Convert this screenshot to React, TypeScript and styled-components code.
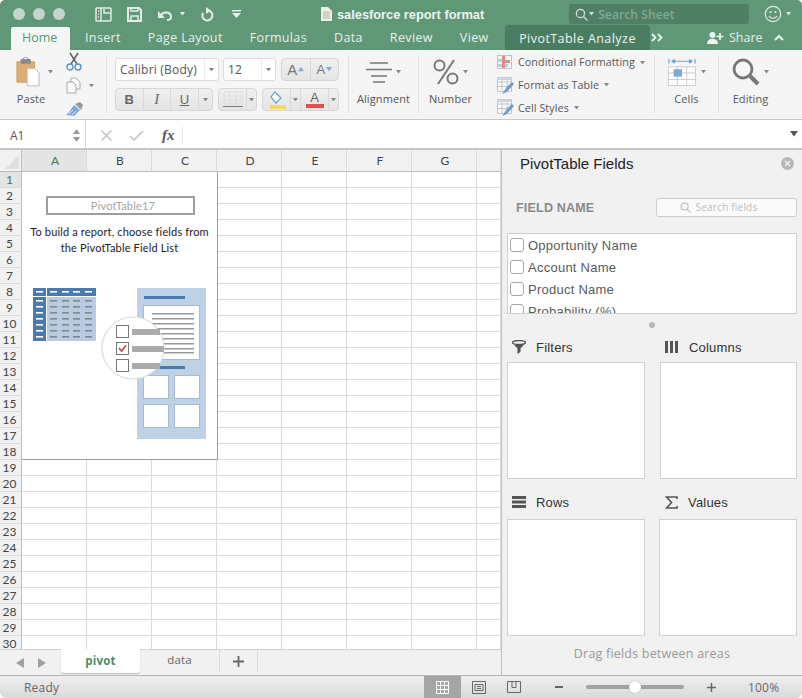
import styled, { createGlobalStyle } from 'styled-components';

const GlobalStyle = createGlobalStyle`
  html, body { margin: 0; padding: 0; background: #fff; }
  body { font-family: "Open Sans", "Liberation Sans", sans-serif; }
  * { box-sizing: border-box; }
`;

const GREEN = '#5f9777';
const columns = ['A', 'B', 'C', 'D', 'E', 'F', 'G', ''];
const rows = Array.from({ length: 30 }, (_, i) => i + 1);
const tabs = ['Insert', 'Page Layout', 'Formulas', 'Data', 'Review', 'View'];
const fields = ['Opportunity Name', 'Account Name', 'Product Name', 'Probability (%)'];

const Window = styled.div`
  width: 802px;
  height: 698px;
  display: flex;
  flex-direction: column;
  overflow: hidden;
  border-radius: 5px 5px 6px 6px;
  background: #fff;
`;

const Header = styled.header`
  background: ${GREEN};
  height: 50px;
  flex-shrink: 0;
`;

const TitleBar = styled.div`
  height: 28px;
  display: flex;
  align-items: center;
  padding-left: 13px;
  position: relative;
`;

const Light = styled.span`
  width: 12px;
  height: 12px;
  border-radius: 50%;
  background: #c6d5cc;
  margin-right: 8px;
`;

const QuickTool = styled.span<{ $left: number }>`
  display: flex;
  margin-left: ${(p) => p.$left}px;
`;

const DocTitle = styled.div`
  margin-left: 80px;
  display: flex;
  align-items: center;
  gap: 5px;
  width: 248px;
  font-family: "Liberation Sans", sans-serif;
  font-size: 12.8px;
  font-weight: 700;
  color: #eef4f0;
  white-space: nowrap;
`;

const SheetSearch = styled.div`
  width: 180px;
  height: 20px;
  border-radius: 3px;
  background: #4f8065;
  display: flex;
  align-items: center;
  padding-left: 6px;
  gap: 1px;
  color: #83a994;
  font-size: 12px;
  font-weight: 600;
  letter-spacing: 0.1px;
`;

const Smiley = styled.div`
  margin-left: 15px;
  display: flex;
  align-items: center;
  gap: 4px;
`;

const TabBar = styled.nav`
  height: 22px;
  display: flex;
  align-items: flex-end;
  padding-left: 11px;
  gap: 5px;
  position: relative;
`;

const Tab = styled.div<{ $active?: boolean }>`
  height: ${(p) => (p.$active ? '23px' : '22px')};
  width: ${(p) => (p.$active ? '59px' : 'auto')};
  margin-right: ${(p) => (p.$active ? '-1px' : '0')};
  padding: 0 11px 3px;
  display: flex;
  align-items: center;
  font-size: 12.5px;
  letter-spacing: ${(p) => (p.$active ? '0' : '0.36px')};
  color: ${(p) => (p.$active ? '#5f9777' : '#e9f1ec')};
  background: ${(p) => (p.$active ? '#f5f5f5' : 'transparent')};
  border-radius: 2px 2px 0 0;
  white-space: nowrap;
`;

const ContextTab = styled.div`
  position: absolute;
  left: 505px;
  bottom: 0;
  width: 145px;
  height: 25px;
  display: flex;
  align-items: center;
  justify-content: center;
  border-radius: 4px 4px 0 0;
  background: #4b7d62;
  color: #eef4f0;
  font-size: 12.5px;
  letter-spacing: 0.45px;
  padding-top: 1px;
`;

const HeaderRight = styled.div`
  position: absolute;
  left: 651px;
  right: 0;
  bottom: 0;
  height: 25px;
  display: flex;
  align-items: center;
  color: #e9f1ec;
  font-size: 12.5px;
`;

const Share = styled.div`
  margin-left: 44px;
  display: flex;
  align-items: center;
  gap: 5px;
  margin-right: 11px;
`;

const Ribbon = styled.section`
  height: 70px;
  flex-shrink: 0;
  display: flex;
  background: #f5f5f5;
  border-bottom: 1px solid #c9c9c9;
  color: #555;
`;

const Divider = styled.div`
  width: 1px;
  margin: 5px 0 6px;
  background: #e3e3e3;
  flex-shrink: 0;
`;

const Clipboard = styled.div`
  width: 106px;
  display: flex;
`;

const BigAction = styled.div<{ $width: number }>`
  width: ${(p) => p.$width}px;
  display: flex;
  flex-direction: column;
  align-items: center;
  justify-content: space-between;
  padding: 7px 0 13px;
  font-size: 11px;
  letter-spacing: 0.1px;
  color: #555;
  flex-shrink: 0;
`;

const BigIcon = styled.div<{ $gap?: number; $pull?: number }>`
  height: 30px;
  display: flex;
  align-items: center;
  gap: ${(p) => p.$gap ?? 4}px;
  margin-left: ${(p) => p.$pull ?? 0}px;
`;

const SmallTools = styled.div`
  display: flex;
  flex-direction: column;
  align-items: flex-start;
  gap: 5px;
  padding: 2px 0 0 4px;
`;

const SmallTool = styled.div`
  display: flex;
  align-items: center;
  gap: 8px;
  height: 19px;
`;

const FontGroup = styled.div`
  width: 241px;
  padding: 8px 8px 0 8px;
  display: flex;
  flex-direction: column;
  gap: 7px;
`;

const ControlRow = styled.div`
  height: 23px;
  display: flex;
  gap: 5px;
`;

const SelectBox = styled.div<{ $width: number }>`
  width: ${(p) => p.$width}px;
  margin-right: ${(p) => (p.$width > 60 ? -1 : 0)}px;
  height: 23px;
  display: flex;
  align-items: center;
  justify-content: space-between;
  background: #fff;
  border: 1px solid #dcdcdc;
  border-radius: 3px;
  padding: 0 0 0 4px;
  font-size: 12px;
  letter-spacing: 0.2px;
  color: #555;
`;

const SelectCaret = styled.span`
  width: 14px;
  height: 100%;
  display: flex;
  align-items: center;
  justify-content: center;
  border-left: 1px solid #ededed;
`;

const ButtonSet = styled.div<{ $width: number }>`
  width: ${(p) => p.$width}px;
  height: 23px;
  display: flex;
  border: 1px solid #d6d6d6;
  border-radius: 4px;
  background: linear-gradient(#efefef, #e5e5e5);
  overflow: hidden;
`;

const SetButton = styled.div<{ $grow?: number }>`
  flex: ${(p) => p.$grow ?? 1} 1 0;
  display: flex;
  align-items: center;
  justify-content: center;
  border-right: 1px solid #d8d8d8;
  font-family: "Liberation Serif", serif;
  font-size: 14px;
  color: #666;
  &:last-child { border-right: 0; }
`;

const Bold = styled.b`
  font-family: "Liberation Sans", sans-serif;
  font-size: 13px;
`;

const Italic = styled.i`
  font-size: 15px;
`;

const Under = styled.u`
  font-family: "Liberation Sans", sans-serif;
  font-size: 13px;
`;

const SizeA = styled.span<{ $size: number }>`
  font-family: "Liberation Sans", sans-serif;
  font-size: ${(p) => p.$size}px;
  color: #777;
  display: flex;
  align-items: center;
  gap: 1px;
`;

const ColorA = styled.span<{ $bar: string }>`
  font-family: "Liberation Sans", sans-serif;
  font-size: 13px;
  line-height: 12px;
  color: #666;
  text-align: center;
  width: 18px;
  border-bottom: 4px solid ${(p) => p.$bar};
`;

const StylesGroup = styled.div`
  width: 171px;
  display: flex;
  flex-direction: column;
  justify-content: space-between;
  padding: 1px 0 0 14px;
`;

const StyleRow = styled.div`
  height: 23px;
  display: flex;
  align-items: center;
  gap: 4px;
  font-size: 10.7px;
  letter-spacing: 0.1px;
  color: #555;
  white-space: nowrap;
`;

const StyleCaret = styled.span`
  display: flex;
  margin-left: 1px;
`;

const FormulaBar = styled.div`
  height: 28px;
  flex-shrink: 0;
  display: flex;
  align-items: center;
  background: #fff;
  color: #555;
`;

const NameBox = styled.div`
  width: 86px;
  height: 100%;
  border-right: 1px solid #d5d5d5;
  display: flex;
  align-items: center;
  justify-content: space-between;
  padding: 2px 5px 0 10px;
  font-size: 12px;
`;

const Stepper = styled.div`
  display: flex;
  flex-direction: column;
  gap: 3px;
`;

const FormulaTools = styled.div`
  display: flex;
  align-items: center;
  gap: 16px;
  padding: 2px 0 0 14px;
  height: 100%;
`;

const Fx = styled.span`
  font-family: "Liberation Serif", serif;
  font-style: italic;
  font-weight: 700;
  font-size: 15px;
  color: #555;
  padding-right: 7px;
  border-right: 1px solid #e2e2e2;
  margin-left: 2px;
`;

const FormulaInput = styled.div`
  flex: 1;
  height: 100%;
  display: flex;
  align-items: center;
  justify-content: flex-end;
  padding-right: 4px;
`;

const Body = styled.main`
  flex: 1;
  display: flex;
  min-height: 0;
  border-top: 2px solid #c6c6c6;
`;

const SheetArea = styled.div`
  width: 501px;
  display: flex;
  flex-direction: column;
  flex-shrink: 0;
`;

const Sheet = styled.div`
  height: 499px;
  position: relative;
  overflow: hidden;
  display: grid;
  grid-template-columns: 22px repeat(7, 65px) 24px;
  grid-template-rows: 22px repeat(30, 16px);
  background: #fff;
`;

const Corner = styled.div`
  background: #f2f2f2;
  border-right: 1px solid #bcbcbc;
  border-bottom: 1px solid #bcbcbc;
  position: relative;
  &::after {
    content: '';
    position: absolute;
    right: 2px;
    bottom: 2px;
    border-style: solid;
    border-width: 0 0 14px 14px;
    border-color: transparent transparent #dfdfdf transparent;
  }
`;

const ColHead = styled.div<{ $active?: boolean }>`
  background: ${(p) => (p.$active ? '#e4e4e4' : '#f2f2f2')};
  border-right: 1px solid #dadada;
  border-bottom: 1px solid #bcbcbc;
  display: flex;
  align-items: center;
  justify-content: center;
  padding-left: 2px;
  font-family: Lato, sans-serif;
  font-size: 12px;
  color: ${(p) => (p.$active ? '#3c7a58' : '#444')};
`;

const RowHead = styled.div<{ $active?: boolean }>`
  background: ${(p) => (p.$active ? '#e4e4e4' : '#f2f2f2')};
  border-right: 1px solid #bcbcbc;
  border-bottom: 1px solid #dadada;
  display: flex;
  align-items: center;
  justify-content: center;
  padding-right: 2px;
  font-family: Lato, sans-serif;
  font-size: 12px;
  color: ${(p) => (p.$active ? '#3c7a58' : '#444')};
`;

const Cell = styled.div`
  border-right: 1px solid #dadada;
  border-bottom: 1px solid #dadada;
`;

const Placeholder = styled.div`
  position: absolute;
  left: 22px;
  top: 22px;
  width: 196px;
  height: 288px;
  background: #fff;
  border-right: 1px solid #9d9d9d;
  border-bottom: 1px solid #9d9d9d;
  display: flex;
  flex-direction: column;
  align-items: center;
  padding: 24px 0 0 2px;
  font-family: Lato, sans-serif;
`;

const PivotName = styled.div`
  width: 149px;
  height: 19px;
  border: 2px solid #9e9e9e;
  display: flex;
  align-items: center;
  justify-content: center;
  padding-left: 5px;
  font-size: 11px;
  letter-spacing: 0.2px;
  color: #a5a5a5;
`;

const Hint = styled.div`
  margin-top: 9px;
  margin-left: -2px;
  font-size: 11px;
  line-height: 16px;
  letter-spacing: 0.15px;
  text-align: center;
  color: #222;
`;

const Illustration = styled.svg`
  margin-top: 29px;
  align-self: flex-start;
  margin-left: 6px;
`;

const SheetTabs = styled.div`
  flex: 1;
  display: flex;
  background: #f1f1f1;
  border-top: 1px solid #d0d0d0;
  align-items: flex-start;
`;

const SheetNav = styled.div`
  width: 61px;
  height: 24px;
  display: flex;
  align-items: center;
  justify-content: center;
  gap: 14px;
  padding-top: 2px;
`;

const SheetTab = styled.div<{ $active?: boolean }>`
  width: 79px;
  height: ${(p) => (p.$active ? 24 : 23)}px;
  margin-top: -1px;
  padding-bottom: 2px;
  display: flex;
  align-items: center;
  justify-content: center;
  font-size: 11.5px;
  letter-spacing: 0.2px;
  font-weight: ${(p) => (p.$active ? 700 : 400)};
  color: ${(p) => (p.$active ? '#4f8a68' : '#666')};
  background: ${(p) => (p.$active ? '#fff' : 'transparent')};
  border-radius: 0 0 3px 3px;
  box-shadow: ${(p) => (p.$active ? '0 1px 1px #bbb' : 'none')};
`;

const AddSheet = styled.div`
  width: 39px;
  height: 22px;
  border-left: 1px solid #dcdcdc;
  border-right: 1px solid #dcdcdc;
  display: flex;
  align-items: center;
  justify-content: center;
`;

const Panel = styled.aside`
  flex: 1;
  display: flex;
  flex-direction: column;
  background: #f1f1f1;
  border-left: 1px solid #bdbdbd;
  padding: 0 5px;
  min-width: 0;
`;

const PanelHead = styled.div`
  height: 26px;
  display: flex;
  align-items: center;
  justify-content: space-between;
  padding: 0 3px 0 13px;
  font-family: "Liberation Sans", sans-serif;
  font-size: 15px;
  color: #222;
`;

const CloseDot = styled.span`
  width: 13px;
  height: 13px;
  border-radius: 50%;
  background: #b6b6b6;
  display: flex;
  align-items: center;
  justify-content: center;
`;

const FieldHead = styled.div`
  margin-top: 21px;
  height: 20px;
  display: flex;
  align-items: center;
  justify-content: space-between;
  padding-left: 9px;
  font-family: "Liberation Sans", sans-serif;
  font-size: 12.5px;
  font-weight: 700;
  letter-spacing: 0.2px;
  color: #8a8a8a;
`;

const FieldLabel = styled.span`
  padding-top: 1px;
`;

const FieldSearch = styled.div`
  width: 141px;
  height: 19px;
  background: #fafafa;
  border: 1px solid #cdcdcd;
  border-radius: 3px;
  display: flex;
  align-items: center;
  justify-content: center;
  gap: 5px;
  padding-right: 16px;
  font-family: "Open Sans", sans-serif;
  font-size: 10px;
  font-weight: 400;
  letter-spacing: 0.2px;
  color: #bdbdbd;
`;

const FieldList = styled.div`
  margin-top: 16px;
  height: 81px;
  background: #fff;
  border: 1px solid #cfcfcf;
  overflow: hidden;
  padding-left: 2px;
`;

const FieldRow = styled.label`
  height: 22px;
  display: flex;
  align-items: center;
  gap: 4px;
  font-family: "Liberation Sans", sans-serif;
  font-size: 13px;
  letter-spacing: 0.25px;
  color: #5a5a5a;
`;

const Box = styled.span`
  width: 14px;
  height: 14px;
  border: 1px solid #a9a9a9;
  border-radius: 3px;
  background: #fff;
  flex-shrink: 0;
`;

const Grip = styled.div`
  height: 22px;
  display: flex;
  align-items: center;
  justify-content: center;
  &::before {
    content: '';
    width: 6px;
    height: 6px;
    border-radius: 50%;
    background: #b7b7b7;
  }
`;

const AreaGrid = styled.div`
  display: grid;
  grid-template-columns: 138px 137px;
  column-gap: 15px;
  row-gap: 12px;
`;

const Area = styled.div`
  display: flex;
  flex-direction: column;
`;

const AreaLabel = styled.div`
  height: 22px;
  display: flex;
  align-items: center;
  gap: 10px;
  padding-left: 5px;
  font-family: "Liberation Sans", sans-serif;
  font-size: 13px;
  letter-spacing: 0.2px;
  color: #333;
`;

const DropBox = styled.div<{ $top: number; $bleed?: boolean }>`
  height: 117px;
  margin-top: ${(p) => p.$top}px;
  margin-left: ${(p) => (p.$bleed ? -1 : 0)}px;
  background: #fff;
  border: 1px solid #cfcfcf;
`;

const DragHint = styled.div`
  margin-top: 9px;
  text-align: center;
  font-size: 12.5px;
  letter-spacing: 0.2px;
  color: #999;
`;

const StatusBar = styled.footer`
  height: 23px;
  flex-shrink: 0;
  display: flex;
  align-items: center;
  border-top: 1px solid #b5b5b5;
  background: linear-gradient(#efefef, #d9d9d9);
  font-size: 12px;
  color: #666;
`;

const Ready = styled.span`
  width: 424px;
  padding-left: 24px;
  letter-spacing: 0.2px;
`;

const ViewButton = styled.div<{ $active?: boolean }>`
  width: ${(p) => (p.$active ? 37 : 35)}px;
  height: 100%;
  display: flex;
  align-items: center;
  justify-content: center;
  background: ${(p) => (p.$active ? '#a5a5a5' : 'transparent')};
`;

const ZoomMinus = styled.span`
  width: 8px;
  height: 2px;
  margin-left: 24px;
  background: #666;
`;

const ZoomTrack = styled.div`
  width: 98px;
  height: 4px;
  border-radius: 2px;
  background: #a2a2a2;
  position: relative;
  margin: 0 23px;
`;

const ZoomKnob = styled.span`
  position: absolute;
  left: 43px;
  top: -4px;
  width: 12px;
  height: 12px;
  border-radius: 50%;
  background: #fff;
  box-shadow: 0 0 1px #888;
`;

const Percent = styled.span`
  margin-left: 32px;
  letter-spacing: 0.2px;
`;

const Caret = ({ color = '#888', size = 5, up }: { color?: string; size?: number; up?: boolean }) => (
  <svg width={size} height={size * 0.7} viewBox="0 0 10 7"><path d={up ? 'M0 7h10L5 0z' : 'M0 0h10L5 7z'} fill={color} /></svg>
);

const Q = { fill: 'none', stroke: '#e4eee8', strokeWidth: 2 };

const PaneIcon = () => (
  <svg width="17" height="15" viewBox="0 0 17 15">
    <rect x="1" y="1" width="15" height="13" rx="1" {...Q} strokeWidth={1.5} />
    <path d="M6 1v13M3 4h1M3 7h1M3 10h1M9 2v4h6" {...Q} strokeWidth={1.5} />
  </svg>
);

const SaveIcon = () => (
  <svg width="15" height="15" viewBox="0 0 15 15">
    <path d="M1 1h11l2 2v11H1z" {...Q} />
    <path d="M4 1v3h7V1M4 14V9h7v5" {...Q} strokeWidth={1.5} />
  </svg>
);

const UndoIcon = () => (
  <svg width="16" height="13" viewBox="0 0 16 13">
    <path d="M3 9c2-6 11-6 11 0 0 2-2 3-4 3" {...Q} />
    <path d="M1 3v7h7z" fill="#e4eee8" />
  </svg>
);

const RedoIcon = () => (
  <svg width="14" height="15" viewBox="0 0 14 15">
    <path d="M8 3.5A5 5 0 1 1 3 6" {...Q} />
    <path d="M6 0l5 3.5L6 7z" fill="#e4eee8" />
  </svg>
);

const CustomizeIcon = () => (
  <svg width="9" height="8" viewBox="0 0 9 8">
    <path d="M0 0h9v1.5H0zM0 3h9L4.500 8z" fill="#e4eee8" />
  </svg>
);

const DocIcon = () => (
  <svg width="11" height="14" viewBox="0 0 11 14">
    <path d="M0 0h7l4 4v10H0z" fill="#eef0e6" />
    <path d="M2 5h7M2 7h7M2 9h7M2 11h7" stroke="#a9b8a8" />
  </svg>
);

const SearchGlyph = ({ color, size }: { color: string; size: number }) => (
  <svg width={size} height={size} viewBox="0 0 12 12">
    <circle cx="5" cy="5" r="3.800" fill="none" stroke={color} strokeWidth="1.100" />
    <path d="M8 8l3.500 3.500" stroke={color} strokeWidth="1.200" />
  </svg>
);

const SmileIcon = () => (
  <svg width="18" height="18" viewBox="0 0 18 18">
    <circle cx="9" cy="9" r="7.700" fill="none" stroke="#e4eee8" strokeWidth="1.200" />
    <circle cx="6.500" cy="7" r="1" fill="#e4eee8" />
    <circle cx="11.500" cy="7" r="1" fill="#e4eee8" />
    <path d="M5 11c2 3 6 3 8 0" fill="none" stroke="#e4eee8" strokeWidth="1.200" />
  </svg>
);

const ShareIcon = () => (
  <svg width="17" height="12" viewBox="0 0 17 12">
    <circle cx="5.500" cy="3" r="3" fill="#eef4f0" />
    <path d="M0 12c0-7 11-7 11 0z" fill="#eef4f0" />
    <path d="M13 1v7M9.500 4.500h7" stroke="#eef4f0" strokeWidth="1.700" />
  </svg>
);

const PasteIcon = () => (
  <svg width="24" height="30" viewBox="0 0 26 32">
    <path d="M1 5h19v22H1z" fill="#dfae75" stroke="#c9985f" />
    <rect x="5" y="2" width="11" height="5" rx="1" fill="#8a8a8a" />
    <path d="M8 2c0-3 5-3 5 0" fill="none" stroke="#8a8a8a" />
    <path d="M12 12h8l5 5v14H12z" fill="#fff" stroke="#b5b5b5" />
  </svg>
);

const CutIcon = () => (
  <svg width="16" height="19" viewBox="0 0 16 19">
    <path d="M4 1l7 11M12 1L5 12" stroke="#666" strokeWidth="1.600" />
    <circle cx="4" cy="15" r="3" fill="none" stroke="#5b8fc4" strokeWidth="1.300" />
    <circle cx="12" cy="15" r="3" fill="none" stroke="#5b8fc4" strokeWidth="1.300" />
  </svg>
);

const CopyIcon = () => (
  <svg width="15" height="17" viewBox="0 0 15 17">
    <path d="M5 1h5l4 4v7H5z" fill="#fafafa" stroke="#aaa" />
    <path d="M1 5h6l3 3v8H1z" fill="#fafafa" stroke="#aaa" />
  </svg>
);

const BrushIcon = () => (
  <svg width="17" height="16" viewBox="0 0 17 16">
    <path d="M9 2l5-2 3 3-2 5z" fill="#9a9a9a" />
    <path d="M8 3l6 5-6 6-8-1c3-2 5-6 8-10z" fill="#7ea9d6" />
    <path d="M3 12l4-4M6 13l4-4" stroke="#d9e6f3" />
  </svg>
);

const AlignIcon = () => (
  <svg width="26" height="21" viewBox="0 0 26 21">
    <path d="M4 1h18M0 7.500h26M5 14h16M7 20h12" stroke="#777" strokeWidth="1.500" />
  </svg>
);

const PercentIcon = () => (
  <svg width="26" height="26" viewBox="0 0 26 26">
    <circle cx="6.500" cy="6.500" r="5" fill="none" stroke="#777" strokeWidth="2" />
    <circle cx="19.500" cy="19.500" r="5" fill="none" stroke="#777" strokeWidth="2" />
    <path d="M21 1L5 25" stroke="#777" strokeWidth="2" />
  </svg>
);

const CondIcon = () => (
  <svg width="17" height="14" viewBox="0 0 17 14">
    <rect x=".5" y=".5" width="14" height="13" fill="#f7f7f7" stroke="#c2c2c2" />
    <path d="M1 4h4v3H1zM1 9h10v3H1z" fill="#b9cde3" />
    <path d="M5 1h3v12H5zM5 5h8v3H5z" fill="#df8d88" />
  </svg>
);

const TableIcon = () => (
  <svg width="17" height="17" viewBox="0 0 17 17">
    <path d="M.5.500h14v14H.5zM.5 5h14M.5 9.500h14M5 .5v14M10 .5v14" fill="#fafafa" stroke="#c4c4c4" />
    <path d="M.5.500h14V3H.5z" fill="#c9d6e5" />
    <path d="M15 5l2 2-7 8-5 2c2-2 3-6 10-12z" fill="#6d9fd2" />
  </svg>
);

const CellsIcon = () => (
  <svg width="30" height="28" viewBox="0 0 30 30">
    <path d="M1 1v5M29 1v5" stroke="#6d9fd2" strokeWidth="1.200" />
    <path d="M4 3.500h22M4 3.500l3-2v4zM26 3.500l-3-2v4z" fill="#6d9fd2" stroke="#6d9fd2" />
    <path d="M.5 9.500h29v20H.5zM.5 16h29M.5 23h29M10 9.500v20M20 9.500v20" fill="#fff" stroke="#c8c8c8" />
    <rect x="6" y="12" width="9" height="8" fill="#7ea9d6" />
  </svg>
);

const EditingIcon = () => (
  <svg width="28" height="28" viewBox="0 0 28 28">
    <circle cx="11" cy="11" r="9" fill="none" stroke="#777" strokeWidth="2.800" />
    <path d="M18 18l8 8" stroke="#777" strokeWidth="4" />
  </svg>
);

const BorderIcon = () => (
  <svg width="20" height="17" viewBox="0 0 20 17">
    <path d="M1 1h18v12H1zM1 5h18M1 9h18M7 1v12M13 1v12" fill="none" stroke="#d0d0d0" strokeDasharray="1 1" />
    <path d="M0 15.500h20" stroke="#777" />
  </svg>
);

const FillIcon = () => (
  <svg width="19" height="18" viewBox="0 0 19 18">
    <path d="M8 1l6 6-5 5-5-6z" fill="#fff" stroke="#6d9fd2" strokeWidth="1.200" />
    <path d="M3 14h16v4H3z" fill="#f3dc55" />
  </svg>
);

const CrossIcon = () => (
  <svg width="13" height="13" viewBox="0 0 13 13"><path d="M1.500 1.500l10 10M11.500 1.500l-10 10" stroke="#c6c6c6" strokeWidth="1.600" /></svg>
);

const TickIcon = () => (
  <svg width="15" height="13" viewBox="0 0 15 13"><path d="M1 7l4 4 9-9" fill="none" stroke="#c6c6c6" strokeWidth="1.600" /></svg>
);

const FunnelIcon = () => (
  <svg width="14" height="14" viewBox="0 0 14 14">
    <ellipse cx="7" cy="2.500" rx="6.500" ry="2" fill="none" stroke="#555" strokeWidth="1.400" />
    <path d="M1 3.500l4.500 5V14L8.500 12V8.500L13 3.500c-3 2-9 2-12 0z" fill="#555" />
  </svg>
);

const ColumnsIcon = () => (
  <svg width="14" height="12" viewBox="0 0 14 12"><path d="M0 0h3v12H0zM5 0h3v12H5zM10 0h3v12h-3z" fill="#555" /></svg>
);

const RowsIcon = () => (
  <svg width="14" height="12" viewBox="0 0 14 12"><path d="M0 0h14v3H0zM0 4.500h14v3H0zM0 9h14v3H0z" fill="#555" /></svg>
);

const SigmaIcon = () => (
  <svg width="13" height="13" viewBox="0 0 13 13"><path d="M12 3V1H1.500l5 5.500-5 5.500H12v-2" fill="none" stroke="#555" strokeWidth="1.600" /></svg>
);

const Arrow = ({ dir }: { dir: 'left' | 'right' }) => (
  <svg width="8" height="10" viewBox="0 0 8 10">
    <path d={dir === 'left' ? 'M8 0v10L0 5z' : 'M0 0v10l8-5z'} fill="#a0a0a0" />
  </svg>
);

const PlusIcon = ({ color = '#666', size = 11 }: { color?: string; size?: number }) => (
  <svg width={size} height={size} viewBox="0 0 11 11"><path d="M5.500 0v11M0 5.500h11" stroke={color} strokeWidth="1.800" /></svg>
);

const GridViewIcon = () => (
  <svg width="13" height="13" viewBox="0 0 13 13"><path d="M.5.500h12v12H.5zM.5 4.500h12M.5 8.500h12M4.500.5v12M8.500.5v12" fill="none" stroke="#fff" /></svg>
);

const PageViewIcon = () => (
  <svg width="14" height="13" viewBox="0 0 14 13"><path d="M.5.500h13v12H.5zM3 3.500h8v6H3zM5 5.500h4M5 7.500h4" fill="none" stroke="#666" /></svg>
);

const BreakViewIcon = () => (
  <svg width="14" height="13" viewBox="0 0 14 13"><path d="M.5.500h13v11H.5zM5 .5v6h4v-6" fill="none" stroke="#666" /></svg>
);

const dash = (xs: number[], ys: number[], w: number, color: string) =>
  ys.flatMap((y) => xs.map((x) => <rect key={`${color}${x}-${y}`} x={x} y={y} width={w} height={1.6} fill={color} />));

const PivotArt = () => (
  <Illustration width="180" height="155" viewBox="30 285 180 155">
    <rect x="33" y="288" width="13" height="8" fill="#4a7bad" />
    <rect x="47" y="288" width="49" height="8" fill="#4a7bad" />
    <rect x="33" y="297" width="13" height="44" fill="#4a7bad" />
    <rect x="47" y="297" width="49" height="44" fill="#b9cbe0" />
    {dash([36], [291, 300, 306, 312, 318, 324, 330, 336], 7, '#fff')}
    {dash([50, 62, 73, 85], [291], 7, '#fff')}
    {dash([50, 62, 73, 85], [300, 306, 312, 318, 324, 330, 336], 7, '#808890')}

    <rect x="137" y="288" width="69" height="151" fill="#bed1e6" />
    <rect x="144" y="296" width="41" height="3" fill="#4a7bad" />
    <rect x="143.500" y="305.500" width="56" height="54" fill="#fff" stroke="#a6bad0" />
    {[313, 318, 323, 328, 333, 338, 343, 348, 352].map((y) => (
      <rect key={y} x="152" y={y} width="42" height="1.500" fill="#999" />
    ))}
    <rect x="160" y="366" width="25" height="3" fill="#4a7bad" />
    {[143.5, 174.5].flatMap((x) => [375.5, 404.5].map((y) => (
      <rect key={`${x}-${y}`} x={x} y={y} width="25" height="23" fill="#fff" stroke="#a6bad0" />
    )))}

    <circle cx="133" cy="348" r="31" fill="#fff" stroke="#d6dfe7" strokeWidth="1.200" />
    {[325.5, 342.5, 359.5].map((y) => (
      <rect key={y} x="116.500" y={y} width="12" height="12" fill="#fff" stroke="#777" />
    ))}
    <path d="M119 348l2.500 3 4.500-5.500" fill="none" stroke="#c0504d" strokeWidth="1.800" />
    <rect x="132" y="329" width="28" height="6" fill="#ababab" />
    <rect x="132" y="346" width="32" height="6" fill="#ababab" />
    <rect x="132" y="363" width="28" height="6" fill="#ababab" />
  </Illustration>
);

const App = () => {
  return (
    <>
      <GlobalStyle />
      <Window>
        <Header>
          <TitleBar>
            <Light />
            <Light />
            <Light />
            <QuickTool $left={22}><PaneIcon /></QuickTool>
            <QuickTool $left={15}><SaveIcon /></QuickTool>
            <QuickTool $left={15}><UndoIcon /></QuickTool>
            <QuickTool $left={7}><Caret color="#e4eee8" /></QuickTool>
            <QuickTool $left={15}><RedoIcon /></QuickTool>
            <QuickTool $left={18}><CustomizeIcon /></QuickTool>
            <DocTitle>
              <DocIcon />
              salesforce report format
            </DocTitle>
            <SheetSearch>
              <SearchGlyph color="#d5e3da" size={13} />
              <Caret color="#d5e3da" />
              <span>&nbsp;Search Sheet</span>
            </SheetSearch>
            <Smiley>
              <SmileIcon />
              <Caret color="#e4eee8" />
            </Smiley>
          </TitleBar>
          <TabBar>
            <Tab $active>Home</Tab>
            {tabs.map((t) => <Tab key={t}>{t}</Tab>)}
            <ContextTab>PivotTable Analyze</ContextTab>
            <HeaderRight>
              <svg width="12" height="9" viewBox="0 0 12 9">
                <path d="M1 1l3.500 3.500L1 8M7 1l3.500 3.500L7 8" fill="none" stroke="#eef4f0" strokeWidth="1.800" />
              </svg>
              <Share>
                <ShareIcon />
                Share
              </Share>
              <svg width="10" height="7" viewBox="0 0 10 7">
                <path d="M1 6l4-4 4 4" fill="none" stroke="#eef4f0" strokeWidth="2" />
              </svg>
            </HeaderRight>
          </TabBar>
        </Header>

        <Ribbon>
          <Clipboard>
            <BigAction $width={62}>
              <BigIcon $gap={8} $pull={7}><PasteIcon /><Caret /></BigIcon>
              Paste
            </BigAction>
            <SmallTools>
              <SmallTool><CutIcon /></SmallTool>
              <SmallTool><CopyIcon /><Caret /></SmallTool>
              <SmallTool><BrushIcon /></SmallTool>
            </SmallTools>
          </Clipboard>
          <Divider />
          <FontGroup>
            <ControlRow>
              <SelectBox $width={104}>Calibri (Body)<SelectCaret><Caret /></SelectCaret></SelectBox>
              <SelectBox $width={53}>12<SelectCaret><Caret /></SelectCaret></SelectBox>
              <ButtonSet $width={58}>
                <SetButton><SizeA $size={15}>A<Caret color="#7ea9d6" size={6} up /></SizeA></SetButton>
                <SetButton><SizeA $size={13}>A<Caret color="#7ea9d6" size={6} /></SizeA></SetButton>
              </ButtonSet>
            </ControlRow>
            <ControlRow>
              <ButtonSet $width={98}>
                <SetButton><Bold>B</Bold></SetButton>
                <SetButton><Italic>I</Italic></SetButton>
                <SetButton><Under>U</Under></SetButton>
                <SetButton $grow={0.5}><Caret /></SetButton>
              </ButtonSet>
              <ButtonSet $width={39}>
                <SetButton $grow={3}><BorderIcon /></SetButton>
                <SetButton><Caret /></SetButton>
              </ButtonSet>
              <ButtonSet $width={77}>
                <SetButton $grow={3}><FillIcon /></SetButton>
                <SetButton><Caret /></SetButton>
                <SetButton $grow={3}><ColorA $bar="#d9534f">A</ColorA></SetButton>
                <SetButton><Caret /></SetButton>
              </ButtonSet>
            </ControlRow>
          </FontGroup>
          <Divider />
          <BigAction $width={69}>
            <BigIcon><AlignIcon /><Caret /></BigIcon>
            Alignment
          </BigAction>
          <Divider />
          <BigAction $width={63}>
            <BigIcon><PercentIcon /><Caret /></BigIcon>
            Number
          </BigAction>
          <Divider />
          <StylesGroup>
            <StyleRow><CondIcon />Conditional Formatting <StyleCaret><Caret /></StyleCaret></StyleRow>
            <StyleRow><TableIcon />Format as Table <StyleCaret><Caret /></StyleCaret></StyleRow>
            <StyleRow><TableIcon />Cell Styles <StyleCaret><Caret /></StyleCaret></StyleRow>
          </StylesGroup>
          <Divider />
          <BigAction $width={63}>
            <BigIcon><CellsIcon /><Caret /></BigIcon>
            Cells
          </BigAction>
          <Divider />
          <BigAction $width={63}>
            <BigIcon><EditingIcon /><Caret /></BigIcon>
            Editing
          </BigAction>
        </Ribbon>

        <FormulaBar>
          <NameBox>
            A1
            <Stepper>
              <svg width="7" height="5" viewBox="0 0 7 5"><path d="M0 5h7L3.500 0z" fill="#999" /></svg>
              <svg width="7" height="5" viewBox="0 0 7 5"><path d="M0 0h7L3.500 5z" fill="#999" /></svg>
            </Stepper>
          </NameBox>
          <FormulaTools>
            <CrossIcon />
            <TickIcon />
            <Fx>fx</Fx>
          </FormulaTools>
          <FormulaInput><Caret color="#555" size={8} /></FormulaInput>
        </FormulaBar>

        <Body>
          <SheetArea>
            <Sheet>
              <Corner />
              {columns.map((c, i) => <ColHead key={i} $active={c === 'A'}>{c}</ColHead>)}
              {rows.map((r) => [
                <RowHead key={`h${r}`} $active={r === 1}>{r}</RowHead>,
                ...columns.map((_, i) => <Cell key={`${r}-${i}`} />),
              ])}
              <Placeholder>
                <PivotName>PivotTable17</PivotName>
                <Hint>
                  To build a report, choose fields from
                  <br />
                  the PivotTable Field List
                </Hint>
                <PivotArt />
              </Placeholder>
            </Sheet>
            <SheetTabs>
              <SheetNav><Arrow dir="left" /><Arrow dir="right" /></SheetNav>
              <SheetTab $active>pivot</SheetTab>
              <SheetTab>data</SheetTab>
              <AddSheet><PlusIcon /></AddSheet>
            </SheetTabs>
          </SheetArea>

          <Panel>
            <PanelHead>
              PivotTable Fields
              <CloseDot>
                <svg width="7" height="7" viewBox="0 0 7 7"><path d="M1 1l5 5M6 1L1 6" stroke="#f1f1f1" strokeWidth="1.500" /></svg>
              </CloseDot>
            </PanelHead>
            <FieldHead>
              <FieldLabel>FIELD NAME</FieldLabel>
              <FieldSearch><SearchGlyph color="#bbb" size={11} />Search fields</FieldSearch>
            </FieldHead>
            <FieldList>
              {fields.map((f) => <FieldRow key={f}><Box />{f}</FieldRow>)}
            </FieldList>
            <Grip />
            <AreaGrid>
              <Area>
                <AreaLabel><FunnelIcon />Filters</AreaLabel>
                <DropBox $top={4} />
              </Area>
              <Area>
                <AreaLabel><ColumnsIcon />Columns</AreaLabel>
                <DropBox $top={4} />
              </Area>
              <Area>
                <AreaLabel><RowsIcon />Rows</AreaLabel>
                <DropBox $top={6} />
              </Area>
              <Area>
                <AreaLabel><SigmaIcon />Values</AreaLabel>
                <DropBox $top={6} $bleed />
              </Area>
            </AreaGrid>
            <DragHint>Drag fields between areas</DragHint>
          </Panel>
        </Body>

        <StatusBar>
          <Ready>Ready</Ready>
          <ViewButton $active><GridViewIcon /></ViewButton>
          <ViewButton><PageViewIcon /></ViewButton>
          <ViewButton><BreakViewIcon /></ViewButton>
          <ZoomMinus />
          <ZoomTrack><ZoomKnob /></ZoomTrack>
          <PlusIcon size={9} />
          <Percent>100%</Percent>
        </StatusBar>
      </Window>
    </>
  );
};

export default App;
